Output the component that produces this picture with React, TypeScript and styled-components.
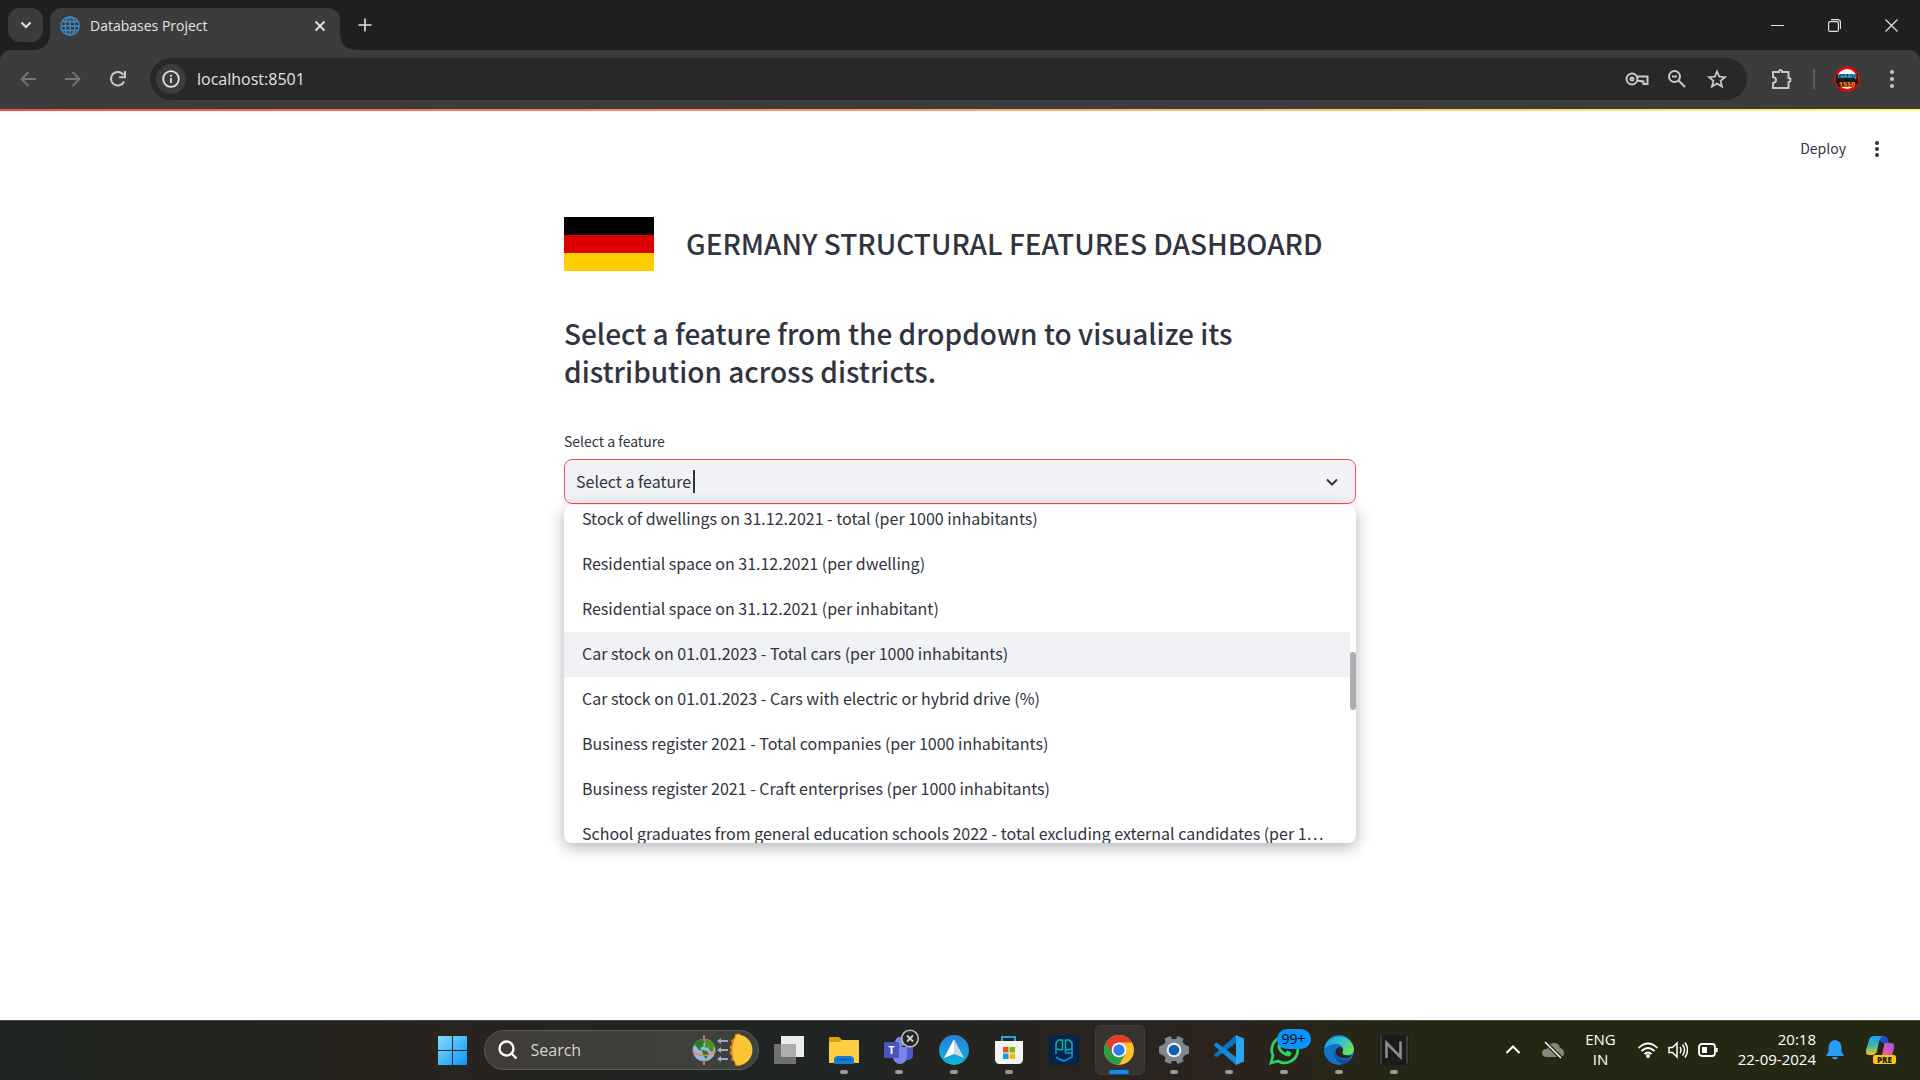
import React from 'react';
import styled, { createGlobalStyle, css } from 'styled-components';

const ui = '"Open Sans", "Noto Sans", sans-serif';
const page = '"Noto Sans CJK KR", "Noto Sans", sans-serif';

const Global = createGlobalStyle`
  * { box-sizing: border-box; }
  html, body, #root { height: 100%; }
  body { margin: 0; overflow: hidden; background: #fff; }
  button { border: 0; padding: 0; background: none; color: inherit; font: inherit; cursor: pointer; }
  h1, h2, ul { margin: 0; padding: 0; }
`;

const Desktop = styled.div`
  min-height: 100vh;
  display: flex;
  flex-direction: column;
  font-family: ${ui};
`;

const TabStrip = styled.header`
  display: flex;
  height: 50px;
  padding: 8px 0 0 8px;
  background: #1f2121;
  color: #e3e3e3;
`;

const TabSearch = styled.button`
  display: grid;
  place-items: center;
  width: 35px;
  height: 34px;
  margin-right: 7px;
  border-radius: 12px;
  background: #3c3c3c;
`;

const Tab = styled.div`
  position: relative;
  display: flex;
  align-items: center;
  width: 290px;
  height: 42px;
  padding: 0 14px 7px 10px;
  border-radius: 12px 12px 0 0;
  background: #3c3c3c;
  font-size: 14px;
  &::before, &::after {
    content: '';
    position: absolute;
    bottom: 0;
    width: 14px;
    height: 14px;
  }
  &::before {
    right: 100%;
    background: radial-gradient(circle at 0 0, transparent 13px, #3c3c3c 14px);
  }
  &::after {
    left: 100%;
    background: radial-gradient(circle at 100% 0, transparent 13px, #3c3c3c 14px);
  }
`;

const TabTitle = styled.span`
  flex: 1;
  margin-left: 10px;
  line-height: 20px;
`;

const PlainButton = styled.button<{ $w?: number; $h?: number }>`
  display: grid;
  place-items: center;
  width: ${(p) => p.$w || 20}px;
  height: ${(p) => p.$h || 20}px;
`;

const NewTab = styled(PlainButton)`
  margin-left: 15px;
  margin-top: 7px;
`;

const WindowControls = styled.div`
  display: flex;
  margin: -8px 0 0 auto;
`;

const Toolbar = styled.nav`
  background: #1f2121;
  color: #c7c7c7;
`;

const ToolbarInner = styled.div`
  display: flex;
  align-items: center;
  height: 59px;
  padding: 0 3px 1px 8px;
  border-radius: 10px 10px 0 0;
  background: #3c3c3c;
`;

const AddressBar = styled.div`
  flex: 1;
  display: flex;
  align-items: center;
  height: 42px;
  margin: 0 14px 0 12px;
  padding: 0 10px 0 6px;
  border-radius: 21px;
  background: #282828;
`;

const SiteInfo = styled(PlainButton)`
  border-radius: 50%;
  background: #3c3c3c;
  color: #e3e3e3;
`;

const Address = styled.input`
  flex: 1;
  min-width: 0;
  margin-left: 11px;
  padding: 0;
  border: 0;
  outline: 0;
  background: none;
  color: #e3e3e3;
  font: 16px/24px ${ui};
`;

const Divider = styled.span`
  width: 2px;
  height: 20px;
  margin: 0 12px;
  background: #5c5c5c;
`;

const Rainbow = styled.div`
  height: 2px;
  background: linear-gradient(90deg, #ff4b4b, #fffd80);
`;

const Viewport = styled.div`
  flex: 1;
  display: flex;
  flex-direction: column;
  background: #fff;
  color: #31333f;
  font-family: ${page};
`;

const AppHeader = styled.div`
  display: flex;
  justify-content: flex-end;
  align-items: center;
  height: 76px;
  padding-right: 33px;
  font-size: 14px;
`;

const Deploy = styled.button`
  margin-right: 21px;
  padding-bottom: 2px;
  line-height: 20px;
`;

const Main = styled.main`
  width: 100%;
  max-width: 792px;
  margin: 0 auto;
  padding-top: 30px;
`;

const TitleRow = styled.div`
  display: flex;
  align-items: center;
  gap: 32px;
`;

const Heading = styled.h1`
  padding-bottom: 2px;
  font-size: 28px;
  line-height: 38px;
  font-weight: 500;
`;

const Intro = styled.h2`
  margin-top: 43px;
  font-size: 28px;
  line-height: 38px;
  font-weight: 500;
`;

const FieldLabel = styled.label`
  display: block;
  margin-top: 41px;
  margin-bottom: 8px;
  font-size: 14px;
  line-height: 20px;
`;

const Combo = styled.div`
  display: flex;
  align-items: center;
  height: 45px;
  padding: 0 17px 0 11px;
  border: 1px solid #ff4b4b;
  border-radius: 8px;
  background: #f0f2f6;
`;

const ComboInput = styled.input`
  field-sizing: content;
  padding: 0 0 2px;
  border: 0;
  outline: 0;
  background: none;
  color: #31333f;
  caret-color: transparent;
  font: 16px/24px ${page};
`;

const Caret = styled.span`
  width: 2px;
  height: 23px;
  margin-left: 2px;
  margin-right: auto;
  background: #31333f;
`;

const Menu = styled.div`
  display: flex;
  height: 338px;
  margin-top: 1px;
  overflow: hidden;
  border-radius: 8px;
  background: #fff;
  box-shadow: 0 4px 16px rgba(0, 0, 0, 0.3);
`;

const Options = styled.ul`
  flex: 1;
  min-width: 0;
  margin-top: -8px;
  list-style: none;
`;

const Option = styled.li<{ $active: boolean }>`
  height: 45px;
  padding: 0 18px;
  overflow: hidden;
  white-space: nowrap;
  text-overflow: ellipsis;
  font-size: 16px;
  line-height: 43px;
  background: ${(p) => (p.$active ? '#f0f2f6' : 'transparent')};
`;

const Scrollbar = styled.div`
  width: 6px;
  padding-top: 147px;
`;

const Thumb = styled.div`
  height: 58px;
  border-radius: 3px;
  background: #adaeb2;
`;

const Taskbar = styled.footer`
  display: grid;
  grid-template-columns: 1fr auto 1fr;
  height: 60px;
  box-shadow: inset 0 1px #444641;
  background: linear-gradient(90deg, #1f2522 0, #22241e 8%, #27231d 20%, #28241f 24%, #202523 38%, #202523 44%, #2a241f 57%, #2b231d 64%, #252715 74%, #252715 100%);
  color: #fff;
`;

const Apps = styled.div`
  grid-column: 2;
  display: flex;
  align-items: center;
  margin-right: 74px;
`;

const AppButton = styled.button<{ $running?: boolean; $active?: boolean }>`
  position: relative;
  display: grid;
  place-items: center;
  width: 55px;
  height: 60px;
  ${(p) => p.$active && css`
    &::before {
      content: '';
      position: absolute;
      inset: 5px 2px 5px 3px;
      border: 1px solid #413e39;
      border-radius: 6px;
      background: #37332e;
    }
  `}
  ${(p) => p.$running && css`
    &::after {
      content: '';
      position: absolute;
      bottom: 6px;
      left: 50%;
      width: ${p.$active ? 20 : 8}px;
      height: 4px;
      border-radius: 2px;
      background: ${p.$active ? '#0a8cff' : '#9b9a97'};
      transform: translateX(-50%);
    }
  `}
  svg { position: relative; overflow: visible; }
`;

const TaskSearch = styled.label`
  display: flex;
  align-items: center;
  width: 275px;
  height: 40px;
  margin: 0 3px 0 4px;
  padding: 0 3px 0 13px;
  border: 1px solid #5d5b56;
  border-radius: 20px;
  background: linear-gradient(90deg, #403c37, #3d423e);
`;

const TaskInput = styled.input`
  flex: 1;
  min-width: 0;
  margin-left: 13px;
  padding: 0;
  border: 0;
  outline: 0;
  background: none;
  font: 16px/24px ${ui};
  &::placeholder { color: #d6d5d3; opacity: 1; }
`;

const Count = styled.span`
  position: absolute;
  top: 9px;
  left: 20px;
  z-index: 1;
  width: 34px;
  border-radius: 10px;
  background: #0a93ff;
  color: #000;
  font-size: 14px;
  line-height: 20px;
  text-align: center;
`;

const Tray = styled.div`
  display: flex;
  align-items: center;
  justify-content: flex-end;
  padding-right: 24px;
  font-size: 15px;
  line-height: 20px;
`;

const TrayText = styled.div<{ $align: string; $gap: number }>`
  padding-bottom: 2px;
  text-align: ${(p) => p.$align};
  white-space: nowrap;
  margin-right: ${(p) => p.$gap}px;
`;

const TrayButton = styled.button<{ $gap: number }>`
  display: flex;
  align-items: center;
  gap: 10px;
  margin-right: ${(p) => p.$gap}px;
`;

type LineProps = { w?: number; h?: number; box?: string; sw?: number; children: React.ReactNode };

const Line = ({ w = 20, h = w, box = '0 0 20 20', sw = 2, children }: LineProps) => (
  <svg width={w} height={h} viewBox={box} fill="none" stroke="currentColor" strokeWidth={sw} aria-hidden="true">
    {children}
  </svg>
);

const Globe = () => (
  <svg width="20" height="20" viewBox="0 0 20 20" fill="none" stroke="#3f8fd0" strokeWidth="1.3" aria-hidden="true">
    <circle cx="10" cy="10" r="9.2" />
    <ellipse cx="10" cy="10" rx="4.8" ry="9.2" />
    <path d="M10 1v18M1 10h18M2.5 5.5h15M2.5 14.5h15" />
  </svg>
);

const Dots = ({ r = 2, gap = 7 }) => (
  <svg width="6" height="22" viewBox="0 0 6 22" fill="currentColor" aria-hidden="true">
    <circle cx="3" cy={11 - gap} r={r} />
    <circle cx="3" cy="11" r={r} />
    <circle cx="3" cy={11 + gap} r={r} />
  </svg>
);

const Flag = () => (
  <svg width="90" height="54" viewBox="0 0 90 54" role="img" aria-label="Flag of Germany">
    <path fill="#000" d="M0 0h90v18H0z" />
    <path fill="#d00" d="M0 18h90v18H0z" />
    <path fill="#ffce00" d="M0 36h90v18H0z" />
  </svg>
);

const Avatar = () => (
  <svg width="26" height="26" viewBox="0 0 26 26" aria-hidden="true">
    <circle cx="13" cy="13" r="11.3" fill="#fff" stroke="#f40000" strokeWidth="2.6" />
    <path d="M2 8h22v9l-3 4H5l-3-4z" fill="#1b1a1c" />
    <text x="13" y="12" textAnchor="middle" fontFamily="Open Sans, sans-serif" fontWeight="800" fontSize="5" fill="#35b5ee">THARIQ</text>
    <text x="13" y="21" textAnchor="middle" fontFamily="Open Sans, sans-serif" fontWeight="800" fontSize="7" fill="#ff7216">1550</text>
  </svg>
);

const WindowsLogo = () => (
  <svg width="29" height="29" viewBox="0 0 29 29" aria-hidden="true">
    <defs>
      <linearGradient id="win" gradientUnits="userSpaceOnUse" x1="0" y1="0" x2="29" y2="29">
        <stop offset="0" stopColor="#83dcfd" />
        <stop offset="1" stopColor="#0a94fb" />
      </linearGradient>
    </defs>
    <path fill="url(#win)" d="M0 0h14v14H0zM15 0h14v14H15zM0 15h14v14H0zM15 15h14v14H15z" />
  </svg>
);

const Equinox = () => (
  <svg width="64" height="34" viewBox="0 0 64 34" aria-hidden="true">
    <circle cx="13" cy="17" r="11.3" fill="#93bbe2" />
    <path d="M3 12q3-6 9-6l2 3-2 2 1 2-4 2 2 3-3-1-3-4z" fill="#2f7a23" />
    <path d="M14 6q7 1 9.500 7l-1 5-3 1-2-4-4-1 1-4z" fill="#4f931b" />
    <path d="M11 17l5 1 2 3-3 5-3-4z" fill="#2f7a23" />
    <path d="M2 18q3 4.500 11 4.500T24.500 18" fill="none" stroke="#ef7f62" strokeWidth="1.500" />
    <path d="M13 2.500v5.500M13 27v5" stroke="#f0695a" strokeWidth="2" />
    <path d="M26 8l4-3v2h7v2h-7v2zM26 17l4-3v2h7v2h-7v2zM26 26l4-3v2h7v2h-7v2z" fill="#9ea9c4" />
    <path d="M49 .5l-5 .5-.5 4-3.500 2 1 4-2.500 3 1.500 3-1.500 3 2.500 3-1 4 3.500 1.500.5 4 5 .5z" fill="#ef7a16" />
    <path d="M46 1.500a15.500 15.500 0 0 1 0 31q-4.500-6-4.500-15.500t4.500-15.500z" fill="#fcc534" />
  </svg>
);

const TaskView = () => (
  <svg width="30" height="28" viewBox="0 0 30 28" aria-hidden="true">
    <path fill="#ededed" d="M7 0h23v21H7z" />
    <path fill="#707070" d="M0 8h22v20H0z" />
    <path fill="#adadad" d="M7 8h15v13H7z" />
  </svg>
);

const Explorer = () => (
  <svg width="30" height="28" viewBox="0 0 30 28" aria-hidden="true">
    <path fill="#e0a00b" d="M0 2q0-1 1-1h9l3 3h15v6H0z" />
    <path fill="#fdce41" d="M0 6h10l3-2h16q1 0 1 1v22H0z" />
    <path fill="#0f7fd8" d="M5 28v-4q0-4 4-4h12q4 0 4 4v4z" />
    <path d="M8 23.500h14" stroke="#0a4c94" strokeWidth="1.300" />
  </svg>
);

const Teams = () => (
  <svg width="30" height="28" viewBox="0 0 30 28" aria-hidden="true">
    <path fill="#5059c9" d="M21 11h8v9a5 5 0 0 1-8 3z" />
    <circle cx="16" cy="6" r="5" fill="#7b83eb" />
    <path fill="#7b83eb" d="M9 11h14v10a7 7 0 0 1-14 0z" />
    <rect x="0" y="6" width="15" height="16" rx="1.500" fill="#4b53bc" />
    <text x="7.500" y="18" textAnchor="middle" fontFamily="Open Sans, sans-serif" fontWeight="700" fontSize="11" fill="#fff">T</text>
    <circle cx="26" cy="2.500" r="8.300" fill="#242622" stroke="#bcbcbc" strokeWidth="1.600" />
    <path d="M23-.5l6 6m0-6l-6 6" stroke="#d0d0d0" strokeWidth="1.800" />
  </svg>
);

const Compass = () => (
  <svg width="30" height="30" viewBox="0 0 30 30" aria-hidden="true">
    <defs>
      <linearGradient id="cmp" x1="0" y1="0" x2="0" y2="1">
        <stop offset="0" stopColor="#2b7be0" />
        <stop offset="1" stopColor="#0cb8d6" />
      </linearGradient>
    </defs>
    <circle cx="15" cy="15" r="15" fill="url(#cmp)" />
    <path d="M15 4L5 23l10-4z" fill="#fff" />
    <path d="M15 4l10 19-10-4z" fill="#cfd8df" />
  </svg>
);

const Store = () => (
  <svg width="30" height="30" viewBox="0 0 30 30" aria-hidden="true">
    <path d="M8 7V2h13v5" fill="none" stroke="#19a9e5" strokeWidth="2" />
    <path d="M1 6h28v18q0 5-5 5H6q-5 0-5-5z" fill="#f3f3f3" />
    <path fill="#f25022" d="M9 12h6v6H9z" /><path fill="#7fba00" d="M15 12h6v6h-6z" />
    <path fill="#00a4ef" d="M9 18h6v6H9z" /><path fill="#ffb900" d="M15 18h6v6h-6z" />
    <path d="M15 12v12M9 18h12" stroke="#f3f3f3" />
  </svg>
);

const Shield = () => (
  <svg width="30" height="30" viewBox="0 0 30 30" fill="none" strokeWidth="1.600" aria-hidden="true">
    <path fill="#04244a" d="M0 0h30v30H0z" />
    <path stroke="#0fb3ad" d="M13.500 15V5H9.500Q7 7 7 9v5l6.500 1M16.500 15V5h3.500q3 2 3 4v5z" />
    <path stroke="#1590cc" d="M7 14v5m0 3l2 1.500 6 2.500 8-4v-8M16.500 15v3h6.500" />
  </svg>
);

const Chrome = () => (
  <svg width="30" height="30" viewBox="0 0 30 30" aria-hidden="true">
    <circle cx="15" cy="15" r="15" fill="#fbc02d" />
    <path d="M15 15L2 7.500A15 15 0 0 0 15 30l6.500-11.200z" fill="#2e9c46" />
    <path d="M2 7.500A15 15 0 0 1 28 7.500H15a7.500 7.500 0 0 0-6.500 11.200z" fill="#e33b2e" />
    <circle cx="15" cy="15" r="7.300" fill="#fff" />
    <circle cx="15" cy="15" r="5.700" fill="#2f7cf0" />
  </svg>
);

const Gear = () => (
  <svg width="30" height="30" viewBox="0 0 30 30" aria-hidden="true">
    <path d="M11.500 1l1.500 3h4l1.500-3 6 2.500L23.500 7l2 2.500 4.500 2v7l-4.500 2-2 2.500 1 3.500-6 2.500-1.500-3h-4l-1.500 3-6-2.500 1-3.500-2-2.500-4.500-2v-7l4.500-2 2-2.500-1-3.500z" fill="#7e8790" />
    <circle cx="15" cy="15" r="7.300" fill="#eef2f5" />
    <circle cx="15" cy="15" r="5.300" fill="#1161b4" />
  </svg>
);

const Code = () => (
  <svg width="30" height="30" viewBox="0 0 30 30" aria-hidden="true">
    <path d="M22 8L2.500 22.500 0 20.500v-1L22 0z" fill="#0b71c1" />
    <path d="M22 22L2.500 7.500 0 9.500v1L22 30z" fill="#1689d8" />
    <path d="M22 0l8 3.500v23L22 30z" fill="#2ba5f2" />
  </svg>
);

const WhatsApp = () => (
  <svg width="30" height="30" viewBox="0 0 30 30" fill="none" aria-hidden="true">
    <path d="M2 28l2-7.500a13 13 0 1 1 5 5.500z" stroke="#25d366" strokeWidth="2.800" />
    <path d="M10 8q-3 3 0 7.500t8.500 6q4 0 4-4l-4-2-2 2q-3-1-5-4.500l1.500-2-1.500-3z" fill="#25d366" />
  </svg>
);

const Edge = () => (
  <svg width="30" height="30" viewBox="0 0 30 30" aria-hidden="true">
    <defs>
      <linearGradient id="edgeTop" x1="0" y1="0" x2="1" y2=".5">
        <stop offset="0" stopColor="#1e9de8" />
        <stop offset=".6" stopColor="#35c5c8" />
        <stop offset="1" stopColor="#6be05b" />
      </linearGradient>
    </defs>
    <circle cx="15" cy="15" r="15" fill="#1272c9" />
    <path d="M.5 13A15 15 0 0 1 30 14q0 6-7 6-5 0-5-2 2-2 1-5-3-5-9-4-6 1-9.500 4z" fill="url(#edgeTop)" />
    <path d="M10 18q1 10 10 11.300 5-2 7.500-6.300-6 3-11 1t-5.500-8z" fill="#0d4ea0" />
    <path d="M17.500 12.500q-5-1-6 3.500 0 6 7 7 6 1 10-2.500-8 1-10.500-2.500 2-3-.5-5.500z" fill="#2a2420" />
  </svg>
);

const Notion = () => (
  <svg width="30" height="30" viewBox="0 0 30 30" aria-hidden="true">
    <rect width="30" height="30" rx="3" fill="#1b1b1b" />
    <path d="M2 1v28M28 1v28" stroke="#3d3d3d" strokeWidth="2" />
    <path d="M7.500 23V8l14 14V6.500" fill="none" stroke="#8c8c8c" strokeWidth="2.600" />
  </svg>
);

const Copilot = () => (
  <svg width="30" height="29" viewBox="0 0 30 29" aria-hidden="true">
    <defs>
      <linearGradient id="cpA" x1="0" y1="0" x2="0" y2="1">
        <stop offset="0" stopColor="#1c9df0" /><stop offset=".5" stopColor="#3fb6a0" /><stop offset="1" stopColor="#f3c51f" />
      </linearGradient>
      <linearGradient id="cpB" x1="1" y1="0" x2="0" y2="1">
        <stop offset="0" stopColor="#a64ff0" /><stop offset=".6" stopColor="#f0609a" /><stop offset="1" stopColor="#ffa24a" />
      </linearGradient>
    </defs>
    <path d="M8 0h10q3 0 4 4l1 4h-5z" fill="#1e50cf" />
    <path d="M8 0h9q-3 1-4 6l-2 9q-1 4-5 4H3q-4 0-3-5L3 4q1-4 5-4z" fill="url(#cpA)" />
    <path d="M19 7h6q4 0 3 5l-2 8q-1 5-5 5h-9q3-1 4-6l2-9q0-3 1-3z" fill="url(#cpB)" />
    <rect x="7" y="19" width="23" height="9" rx="2" fill="#fcc60b" />
    <text x="18.500" y="26.500" textAnchor="middle" fontFamily="Open Sans, sans-serif" fontWeight="800" fontSize="8" fill="#1c1a10">PRE</text>
  </svg>
);

const features = [
  'Stock of dwellings on 31.12.2021 - total (per 1000 inhabitants)',
  'Residential space on 31.12.2021 (per dwelling)',
  'Residential space on 31.12.2021 (per inhabitant)',
  'Car stock on 01.01.2023 - Total cars (per 1000 inhabitants)',
  'Car stock on 01.01.2023 - Cars with electric or hybrid drive (%)',
  'Business register 2021 - Total companies (per 1000 inhabitants)',
  'Business register 2021 - Craft enterprises (per 1000 inhabitants)',
  'School graduates from general education schools 2022 - total excluding external candidates (per 1…',
];

const apps = [
  { name: 'Task view', Icon: TaskView },
  { name: 'File Explorer', Icon: Explorer, running: true },
  { name: 'Teams', Icon: Teams, running: true },
  { name: 'Navigator', Icon: Compass, running: true },
  { name: 'Store', Icon: Store, running: true },
  { name: 'Shield', Icon: Shield },
  { name: 'Chrome', Icon: Chrome, running: true, active: true },
  { name: 'Settings', Icon: Gear, running: true },
  { name: 'Visual Studio Code', Icon: Code, running: true },
  { name: 'WhatsApp', Icon: WhatsApp, running: true, count: '99+' },
  { name: 'Edge', Icon: Edge, running: true },
  { name: 'N', Icon: Notion, running: true },
];

export default function App() {
  return (
    <Desktop>
      <Global />
      <TabStrip>
        <TabSearch aria-label="Search tabs"><Line w={12} box="0 0 12 12"><path d="M1.500 3.500L6 8l4.500-4.500" /></Line></TabSearch>
        <Tab>
          <Globe />
          <TabTitle>Databases Project</TabTitle>
          <PlainButton $w={12} aria-label="Close tab"><Line w={12} box="0 0 12 12" sw={1.800}><path d="M1.500 1.500l9 9m0-9l-9 9" /></Line></PlainButton>
        </Tab>
        <NewTab aria-label="New tab"><Line w={14} box="0 0 14 14" sw={1.600}><path d="M7 .5v13M.5 7h13" /></Line></NewTab>
        <WindowControls>
          <PlainButton $w={57} $h={50} aria-label="Minimize"><Line w={13} box="0 0 13 13" sw={1}><path d="M0 6.500h13" /></Line></PlainButton>
          <PlainButton $w={57} $h={50} aria-label="Restore"><Line w={13} box="0 0 13 13" sw={1.200}><rect x=".6" y="2.600" width="9.800" height="9.800" rx="1.500" /><path d="M3 .6h6.500q3 0 3 3V10" /></Line></PlainButton>
          <PlainButton $w={57} $h={50} aria-label="Close"><Line w={13} box="0 0 13 13" sw={1.200}><path d="M.5.5l12 12m0-12l-12 12" /></Line></PlainButton>
        </WindowControls>
      </TabStrip>
      <Toolbar>
        <ToolbarInner>
          <PlainButton $w={40} $h={40} aria-label="Back"><Line w={16} box="0 0 16 16" sw={1.800}><path stroke="#757575" d="M16 8H2M8.500 1L1.500 8l7 7" /></Line></PlainButton>
          <PlainButton $w={50} $h={40} aria-label="Forward"><Line w={16} box="0 0 16 16" sw={1.800}><path stroke="#757575" d="M0 8h14M7.500 1l7 7-7 7" /></Line></PlainButton>
          <PlainButton $w={40} $h={40} aria-label="Reload"><Line w={16} box="0 0 16 16"><path d="M14 10.500A6.800 6.800 0 1 1 13.500 4" /><path d="M15 0v6.200H9" /></Line></PlainButton>
          <AddressBar>
            <SiteInfo $w={30} $h={30} aria-label="Site information"><Line w={18} box="0 0 18 18" sw={1.800}><circle cx="9" cy="9" r="7.800" /><path d="M9 8v5M9 4.800v2" /></Line></SiteInfo>
            <Address aria-label="Address" defaultValue="localhost:8501" />
            <PlainButton $w={40} $h={40} aria-label="Passwords">
              <Line w={24} h={14} box="0 0 24 14"><circle cx="7" cy="7" r="5.500" /><circle cx="7" cy="7" r="1.500" /><path d="M12 4.500h10.500v7.500h-4V9.500h-2V9H12.500" /></Line>
            </PlainButton>
            <PlainButton $w={40} $h={40} aria-label="Zoom"><Line w={18} box="0 0 18 18"><circle cx="6.500" cy="6.500" r="5.500" /><path d="M10.500 10.500l6.500 6.500M4 6.500h5" /></Line></PlainButton>
            <PlainButton $w={40} $h={40} aria-label="Bookmark"><Line w={20} box="0 0 20 20" sw={1.800}><path d="M10 2.500l2.200 5.200 5.800.5-4.400 3.700 1.400 5.600-5-3-5 3 1.400-5.600L2 8.200l5.800-.5z" /></Line></PlainButton>
          </AddressBar>
          <PlainButton $w={40} $h={40} aria-label="Extensions"><Line w={21} box="0 0 21 21"><path d="M2 3h6q0-2 1.500-2T11 3h6.500v6q2 0 2 2t-2 2v6H2v-5q3-.5 3-3T2 8z" /></Line></PlainButton>
          <Divider />
          <PlainButton $w={40} $h={40} aria-label="Profile"><Avatar /></PlainButton>
          <PlainButton $w={50} $h={40} aria-label="Browser menu"><Dots /></PlainButton>
        </ToolbarInner>
      </Toolbar>
      <Rainbow />
      <Viewport>
        <AppHeader>
          <Deploy>Deploy</Deploy>
          <PlainButton $w={20} $h={24} aria-label="App menu"><Dots gap={6} /></PlainButton>
        </AppHeader>
        <Main>
          <TitleRow>
            <Flag />
            <Heading>GERMANY STRUCTURAL FEATURES DASHBOARD</Heading>
          </TitleRow>
          <Intro>Select a feature from the dropdown to visualize its distribution across districts.</Intro>
          <FieldLabel htmlFor="feature">Select a feature</FieldLabel>
          <Combo>
            <ComboInput id="feature" role="combobox" aria-expanded="true" aria-controls="features" defaultValue="Select a feature" />
            <Caret />
            <Line w={12} box="0 0 12 12"><path d="M1 3.500l5 5 5-5" /></Line>
          </Combo>
          <Menu>
            <Options id="features" role="listbox" aria-label="Features">
              {features.map((f, i) => <Option key={f} role="option" aria-selected={i === 3} $active={i === 3}>{f}</Option>)}
            </Options>
            <Scrollbar><Thumb /></Scrollbar>
          </Menu>
        </Main>
      </Viewport>
      <Taskbar>
        <Apps>
          <AppButton aria-label="Start"><WindowsLogo /></AppButton>
          <TaskSearch>
            <Line w={20} sw={2.400}><circle cx="8.500" cy="8.500" r="7" /><path d="M13.500 13.500l5 5" /></Line>
            <TaskInput placeholder="Search" aria-label="Search" />
            <Equinox />
          </TaskSearch>
          {apps.map(({ name, Icon, running, active, count }) => (
            <AppButton key={name} aria-label={name} $running={running} $active={active}>
              <Icon />
              {count && <Count>{count}</Count>}
            </AppButton>
          ))}
        </Apps>
        <Tray>
          <TrayButton $gap={21} aria-label="Show hidden icons"><Line w={16} box="0 0 16 16"><path d="M1.500 11L8 4.500l6.500 6.500" /></Line></TrayButton>
          <TrayButton $gap={21} aria-label="OneDrive">
            <svg width="22" height="18" viewBox="0 0 22 18" aria-hidden="true">
              <path d="M5 16q-5 0-5-4t5-4q1-6 7-6 5 0 6 5 4 1 4 5t-4 4z" fill="#86867e" />
              <path d="M3 1l16 16" stroke="#252715" strokeWidth="4" /><path d="M3 1l16 16" stroke="#fff" strokeWidth="1.500" />
            </svg>
          </TrayButton>
          <TrayText $align="center" $gap={22}>ENG<br />IN</TrayText>
          <TrayButton $gap={20} aria-label="Network, volume and battery">
            <Line w={20} h={16} box="0 0 20 16" sw={1.800}><path d="M.5 6q9.500-9 19 0M3.500 9q6.500-6 13 0M6.500 12q3.500-3 7 0" /><circle cx="10" cy="14" r="1.200" fill="currentColor" /></Line>
            <Line w={20} h={18} box="0 0 20 18" sw={1.500}><path d="M1 6.500h3.500L9 2v14l-4.500-4.500H1zM12 6q2 3 0 6M14.500 3.500q4 5.500 0 11M17 1.500q5 7.500 0 15" /></Line>
            <Line w={20} h={14} box="0 0 20 14" sw={1.800}><rect x="1" y="1" width="16" height="12" rx="3" /><path d="M18.800 5v4" /><path d="M4 4h5v6H4z" fill="currentColor" stroke="none" /></Line>
          </TrayButton>
          <TrayText $align="right" $gap={10}>20:18<br />22-09-2024</TrayText>
          <TrayButton $gap={22} aria-label="Notifications">
            <svg width="18" height="20" viewBox="0 0 18 20" fill="#2a9dfc" aria-hidden="true"><path d="M9 0q6 1 6.500 7v4.500L18 16H0l2.500-4.500V7Q3 1 9 0zM6 17h6q-1 2.500-3 2.500T6 17z" /></svg>
          </TrayButton>
          <TrayButton $gap={0} aria-label="Copilot"><Copilot /></TrayButton>
        </Tray>
      </Taskbar>
    </Desktop>
  );
}
